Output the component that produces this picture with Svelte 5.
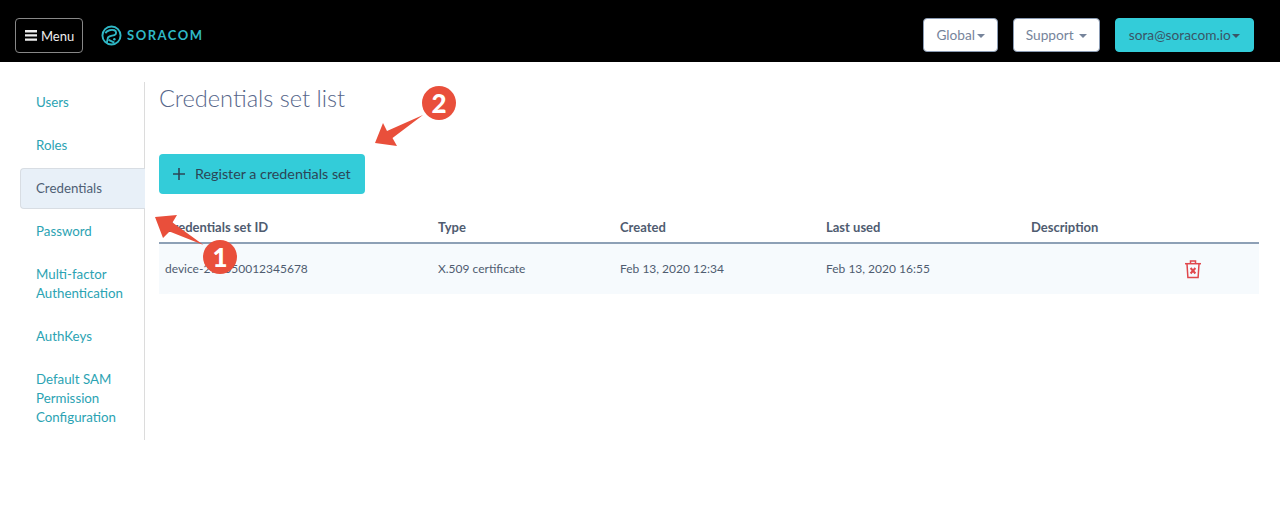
<script lang="ts">
  const sideItems = [
    { label: 'Users' },
    { label: 'Roles' },
    { label: 'Credentials', active: true },
    { label: 'Password' },
    { label: 'Multi-factor Authentication' },
    { label: 'AuthKeys' },
    { label: 'Default SAM Permission Configuration' }
  ];
  const columns = ['Credentials set ID', 'Type', 'Created', 'Last used', 'Description', ''];
</script>

<nav class="topbar">
  <button class="menu">
    <svg width="12" height="11" viewBox="0 0 12 11"><path d="M0 0h12v2.4H0zM0 4.2h12v2.4H0zM0 8.4h12v2.4H0z" fill="#eee" /></svg>
    Menu
  </button>
  <div class="logo">
    <svg width="21" height="21" viewBox="0 0 22 22" fill="none" stroke="#2fb8c6" stroke-width="2">
      <circle cx="11" cy="11" r="9.5" />
      <path d="M4.500 8.500c2-3 6.500-4 9.500-3 2.400 1 2.400 4 0 5-2 .8-5 .8-6.600 2.400L6 19" />
      <path d="M8 15.500l6 3" />
      <circle cx="14" cy="15" r="1.300" fill="#2fb8c6" stroke="none" />
    </svg>
    <span>SORACOM</span>
  </div>
  <div class="spacer"></div>
  <button class="drop">Global <i></i></button>
  <button class="drop support">Support <i class="gap"></i></button>
  <button class="drop user">sora@soracom.io <i></i></button>
</nav>

<div class="page">
  <aside class="side">
    {#each sideItems as item}
      <a href="#top" class="item" class:active={item.active}>{item.label}</a>
    {/each}
  </aside>

  <main class="content">
    <h1>Credentials set list</h1>
    <button class="register">
      <svg class="plus" width="12" height="12" viewBox="0 0 12 12"><path d="M5.200 0h1.600v5.200H12v1.600H6.800V12H5.200V6.800H0V5.200h5.200z" fill="#2c4556" /></svg>
      Register a credentials set
    </button>
    <div class="table">
      <div class="row head">
        {#each columns as col}<div>{col}</div>{/each}
      </div>
      <div class="row body">
        <div>device-295050012345678</div>
        <div>X.509 certificate</div>
        <div>Feb 13, 2020 12:34</div>
        <div>Feb 13, 2020 16:55</div>
        <div></div>
        <div class="trash">
          <svg width="16" height="19" viewBox="0 0 16 19" fill="none" stroke="#e0474c" stroke-width="1.500">
            <path d="M0 3.700h16" />
            <path d="M5.500 3.500V1h5v2.500" />
            <path d="M2 4l.9 13.500h10.200L14 4" />
            <path d="M5.600 8l4.800 5.500M10.400 8l-4.800 5.500" stroke-width="2" />
          </svg>
        </div>
      </div>
    </div>
  </main>
</div>

<svg class="marks" width="1280" height="520" viewBox="0 0 1280 520">
  <path d="M155 217l22-2-4.500 7.500 31 22.500-34-13.500-6.500 6.500z" fill="#e94f3b" />
  <circle cx="220" cy="257" r="17" fill="#e94f3b" />
  <path d="M423 115l-30.500 23 4.500 8-22-3 8-20 4 8z" fill="#e94f3b" />
  <circle cx="439" cy="103" r="17" fill="#e94f3b" />
</svg>
<span class="num one">1</span>
<span class="num two">2</span>

<style>
  :global(body) {
    margin: 0;
    background: #fff;
    font-family: "Lato", "Noto Sans", sans-serif;
    font-size: 13px;
    color: #4a5568;
  }

  .topbar {
    height: 62px;
    background: #000;
    display: flex;
    align-items: center;
    padding: 8px 26px 0 15px;
    box-sizing: border-box;
  }
  .spacer { flex: 1; }

  button {
    font-family: inherit;
    cursor: pointer;
  }

  .menu {
    width: 68px;
    height: 35px;
    margin-top: 1px;
    background: #000;
    color: #eee;
    border: 1px solid #888;
    border-radius: 4px;
    font-size: 13px;
    display: flex;
    align-items: center;
    gap: 4px;
    padding: 0 0 0 9px;
  }

  .logo {
    display: flex;
    align-items: center;
    gap: 5px;
    margin-left: 18px;
    color: #2fb8c6;
    font-weight: 700;
    font-size: 13px;
    letter-spacing: 1.500px;
  }

  .drop {
    height: 34px;
    margin-left: 15px;
    background: #fff;
    border: 1px solid #8a9bb3;
    border-radius: 4px;
    color: #76849b;
    font-size: 13.700px;
    width: 75px;
    padding: 0 0 2px;
    white-space: nowrap;
  }
  .support { width: 87px; }
  .user {
    width: 139px;
    background: #33ccd9;
    border-color: #33ccd9;
    color: #3a5566;
  }
  .drop i {
    display: inline-block;
    border: 4px solid transparent;
    border-top-color: currentColor;
    border-bottom: 0;
    vertical-align: 2px;
    margin-left: -2px;
  }
  .drop i.gap { margin-left: 2px; }

  .page {
    display: flex;
    padding: 20px 21px 0 20px;
    align-items: flex-start;
  }

  .side {
    width: 125px;
    box-sizing: border-box;
    border-right: 1px solid #dcdcdc;
    padding-bottom: 2px;
    display: flex;
    flex-direction: column;
    gap: 2px;
    flex-shrink: 0;
    font-size: 13.300px;
  }
  .item {
    padding: 11px 15px 11px 16px;
    line-height: 19px;
    color: #2ba3b3;
    text-decoration: none;
  }
  .active {
    background: #e8f0f8;
    color: #4f5f75;
    border: 1px solid #d8dde3;
    border-right: 0;
    border-radius: 4px 0 0 4px;
    padding: 10px 15px;
    margin-right: -1px;
  }

  .content {
    flex: 1;
    padding-left: 14px;
  }
  h1 {
    margin: 0;
    font-size: 23.600px;
    font-weight: 300;
    line-height: 32px;
    color: #56668a;
  }
  .register {
    display: flex;
    align-items: center;
    gap: 10px;
    margin-top: 40px;
    width: 206px;
    height: 40px;
    background: #33ccd9;
    border: 0;
    border-radius: 4px;
    color: #2c4556;
    font-size: 14.300px;
    padding: 0 0 1px 14px;
  }

  .table { margin-top: 20px; }
  .row {
    display: grid;
    grid-template-columns: 273px 182px 206px 205px 1fr 74px;
  }
  .row > div {
    padding: 0 6px;
    display: flex;
    align-items: center;
  }
  .head {
    padding-bottom: 2px;
    height: 26px;
    border-bottom: 2px solid #8da0b6;
    font-weight: 700;
    color: #4f5c70;
  }
  .body {
    height: 48px;
    padding-bottom: 2px;
    background: #f6fafd;
    color: #4f5c70;
    font-size: 12px;
  }
  .trash { padding: 2px 0 0 !important; }

  .marks {
    position: absolute;
    top: 0;
    left: 0;
    pointer-events: none;
  }
  .num {
    position: absolute;
    width: 34px;
    text-align: center;
    color: #fff;
    font-weight: 900;
    font-size: 26px;
    line-height: 34px;
  }
  .one { left: 203px; top: 240px; }
  .two { left: 422px; top: 86px; }
</style>
